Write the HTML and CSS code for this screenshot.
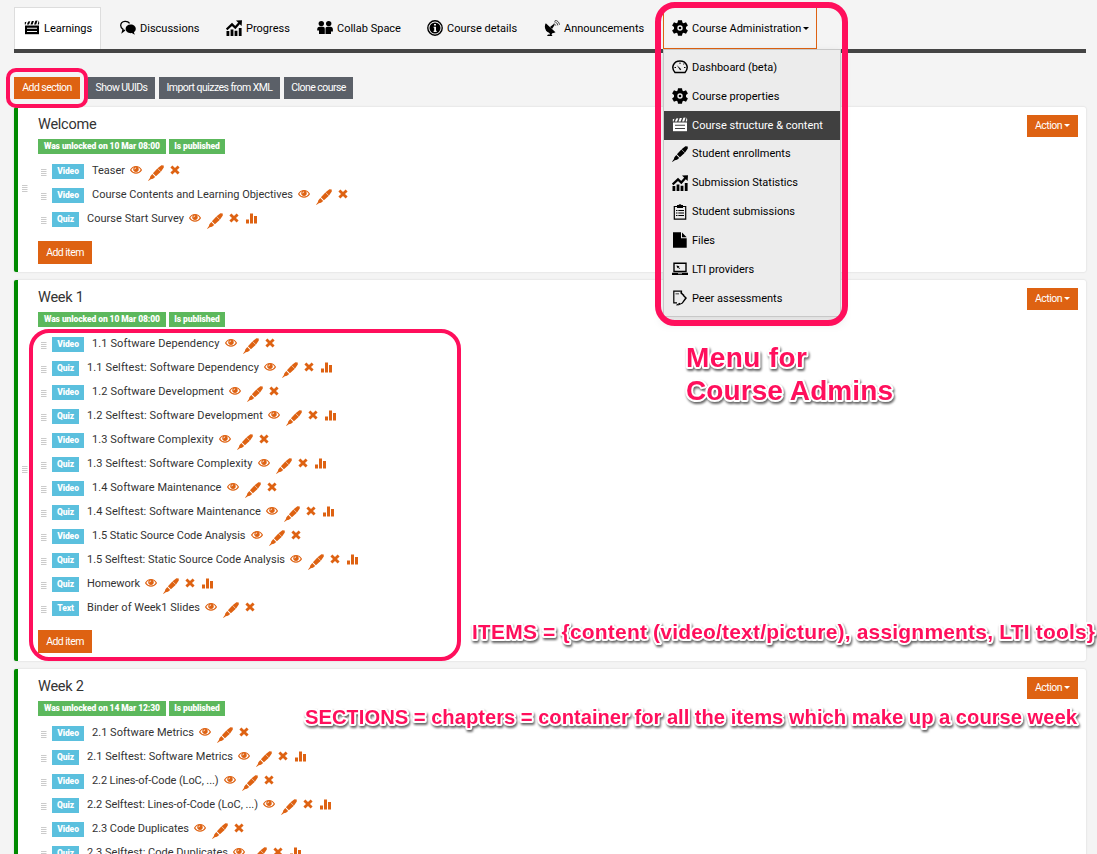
FILE: index.html
```html
<!DOCTYPE html>
<html lang="en">
<head>
<meta charset="utf-8">
<title>Course structure &amp; content</title>
<link rel="stylesheet" href="styles.css">
</head>
<body>
<svg class="sprite" aria-hidden="true">
  <symbol id="clap" viewBox="0 0 16 16"><path d="M1 5.500h14v8.700H1z"/><path d="M.8 2.200 2.400 1.800 1.600 4.400H.8zM4.200 1.600 6.300 1.300 5 4.400H2.900zM7.800 1.100 9.900.9 8.600 4.400H6.500zM11.400.8 13.500.6 12.200 4.400H10.100zM14.800.5 15.200 2.600 15 4.400H13.600z"/><path class="cut" d="M3 7.700h10v1H3zM3 11h10v1H3z"/></symbol>
  <symbol id="chat" viewBox="0 0 16 16"><path d="M9.600 3.400C8.400 1.600 6.600 1.200 5 1.300 2.500 1.500.7 3.400.7 5.600c0 1.700 1 3 2.400 3.800L2.400 12l2.600-2" fill="none" stroke="currentColor" stroke-width="1.300"/><path d="M10.700 4.500c3 0 5.100 1.900 5.100 4.300 0 1.400-.7 2.600-1.900 3.400l.9 2.600-3-1.700c-3.600.4-6.200-1.600-6.200-4.300s2.200-4.300 5.100-4.300z"/></symbol>
  <symbol id="stats" viewBox="0 0 16 16"><path d="M.5 11h2.800v5H.5zM4.600 9.500h2.800V16H4.600zM8.600 10.800h2.800V16H8.600zM12.800 8h2.800v8h-2.800z"/><path d="M.6 9.400 6 4.300 9.300 7.500 13.600 2.800" fill="none" stroke="currentColor" stroke-width="2.300"/><path d="M10 .6 16 .2 15.600 6z"/></symbol>
  <symbol id="people" viewBox="0 0 16 16"><circle cx="4.300" cy="3.600" r="2.700"/><circle cx="11.700" cy="3.600" r="2.700"/><path d="M.2 9.500c0-2 1.300-2.700 2.500-2.700h3.200c1.200 0 1.900.8 1.900 2.200V14H2v-3.500H.2zM8.500 9c0-1.400.7-2.200 1.900-2.200h3.100c1.400 0 2.400 1 2.400 2.700v1.900H14V14H8.500z"/></symbol>
  <symbol id="info" viewBox="0 0 16 16"><circle cx="8" cy="8" r="7.200" fill="none" stroke="currentColor" stroke-width="1.400"/><circle cx="8" cy="8" r="5.500"/><path class="cut" d="M7 4h2v1.600H7zM6.600 6.700H9v4h.7V12H6.600v-1.200h.6V7.800h-.6z"/></symbol>
  <symbol id="dish" viewBox="0 0 16 16"><path d="M1.800 3.300 11.500 12.200C8 14.200 4 13.200 2 10.500.5 8 .5 5.300 1.800 3.300z"/><path d="M5 12h4l-1.500 2.500 1 1.500H3l1-1.500H6zM6 7l3.800-3 .8.900L8 9z"/><path d="M9.800 3.700c1 .2 1.700.8 2 1.900M10.200 1.700c2 .3 3.300 1.600 3.600 3.700M10.800.2c2.700.3 4.400 2 4.700 4.600" fill="none" stroke="currentColor" stroke-width=".7"/></symbol>
  <symbol id="gear" viewBox="0 0 16 16"><path fill-rule="evenodd" d="M6 .3h4l.4 2.200 1.200.7L14 2.300l1.900 3.300L14 7.100v1.800l1.900 1.500-1.900 3.300-2.400-.9-1.200.7-.4 2.200H6l-.4-2.200-1.200-.7-2.400.9L.1 10.400 2 8.900V7.100L.1 5.600 2 2.300l2.400.9 1.200-.7zM8 5.300a2.700 2.700 0 100 5.400 2.700 2.700 0 000-5.400z"/><circle cx="8" cy="8" r="1.300"/></symbol>
  <symbol id="dash" viewBox="0 0 16 16"><path d="M3 13.500C-1.500 8.500 1.600 2 8 2s9.500 6.500 5 11.500z" fill="none" stroke="currentColor" stroke-width="1.500"/><path d="m4.700 6 4.600 4.300-1.200.9zM7.500 3.500h1V5h-1zM2.500 8H4v1H2.500zM12 8h1.500v1H12zM11 5l1-.8.600.6-.8 1z"/></symbol>
  <symbol id="pen" viewBox="0 0 16 16"><path d="M13.400.3 15.700.5 15.800 2.500 12.900 6.700 7.900 11.300 4.900 8.300 9.600 3.200zM4.300 8.900 7.200 11.900 5 13.700 2.800 14.200.3 15.900.2 15.500 1.800 13.200 2.400 11.200z"/><path class="slit" d="m9.300 3.200 3.600 3.600" fill="none" stroke-width=".6"/></symbol>
  <symbol id="clip" viewBox="0 0 16 16"><path d="M2.300 2.500h11.400v12.700H2.300z" fill="none" stroke="currentColor" stroke-width="1.200"/><path d="M5 1h1.500L8 0l1.500 1H11v3H5zM4 6h1.500v1H4zM6.300 6H12v1H6.300zM4 8.500h1.500v1H4zM6.300 8.500H12v1H6.300zM4 11h1.500v1H4zM6.300 11H12v1H6.300z"/></symbol>
  <symbol id="file" viewBox="0 0 16 16"><path d="M1 .3h8v6h5.700v9.400H1zM10 .5l4.700 4.700H10z"/></symbol>
  <symbol id="laptop" viewBox="0 0 16 16"><path d="M2 2.300h12v8.200H2z" fill="none" stroke="currentColor" stroke-width="1.400"/><path d="M0 11.800h16V14H0zM4.500 4.500l3 .8-.9.600L8 7.500l-.6.600-1.400-1.600-.7.800z"/><path class="cut" d="M6 12.400h4v.7H6z"/></symbol>
  <symbol id="peer" viewBox="0 0 16 16"><path d="M9.500 3.500V1.200H1.800v11.600H5M4.500 15.300l3.500-2" fill="none" stroke="currentColor" stroke-width="1.200"/><path d="m8.500 1.500 4 3.500-1 1-3-2.500zM11.500 4.500 15 8l-4.300 5.500-4.900 2.200 1.500-1.800 2.500-1.200L13 8 10.500 5.500zM3.500 3.500H7v.8H3.500z"/></symbol>
  <symbol id="eye" viewBox="0 0 12 10"><path d="M.6 5C3 .3 9 .3 11.400 5 9 9.200 3 9.200.6 5z" fill="none" stroke="currentColor" stroke-width="1.200"/><circle cx="6" cy="4.300" r="2.700"/><path d="M4.700 4.300c0-.9.500-1.400 1.400-1.400" fill="none" stroke="#fff" stroke-width=".8"/></symbol>
  <symbol id="x" viewBox="0 0 10 10"><path d="M2.400.5 5 3 7.600.5l2 2L7 5l2.600 2.500-2 2L5 7 2.400 9.500l-2-2L3 5 .4 2.500z"/></symbol>
  <symbol id="bars" viewBox="0 0 11 11"><path d="M0 6.500h3V10.500H0zM4 .5h3v10H4zM8 3h3v7.500H8z"/></symbol>
  <symbol id="grip" viewBox="0 0 6 8"><path d="M0 1h5.500v.8H0zM0 3h5.500v.8H0zM0 5h5.500v.8H0zM0 7h5.500v.8H0z"/></symbol>
</svg>

<main class="page">
  <nav class="tabs">
    <a class="tab learn active"><svg class="ic"><use href="#clap"/></svg>Learnings</a>
    <a class="tab disc"><svg class="ic"><use href="#chat"/></svg>Discussions</a>
    <a class="tab prog"><svg class="ic"><use href="#stats"/></svg>Progress</a>
    <a class="tab collab"><svg class="ic"><use href="#people"/></svg>Collab Space</a>
    <a class="tab details"><svg class="ic"><use href="#info"/></svg>Course details</a>
    <a class="tab ann"><svg class="ic"><use href="#dish"/></svg>Announcements</a>
    <div class="tab admin"><svg class="ic"><use href="#gear"/></svg>Course Administration<i class="caret"></i>
      <ul class="menu">
        <li><svg class="ic"><use href="#dash"/></svg>Dashboard (beta)</li>
        <li><svg class="ic"><use href="#gear"/></svg>Course properties</li>
        <li class="selected"><svg class="ic"><use href="#clap"/></svg>Course structure &amp; content</li>
        <li><svg class="ic"><use href="#pen"/></svg>Student enrollments</li>
        <li><svg class="ic"><use href="#stats"/></svg>Submission Statistics</li>
        <li><svg class="ic"><use href="#clip"/></svg>Student submissions</li>
        <li><svg class="ic"><use href="#file"/></svg>Files</li>
        <li><svg class="ic"><use href="#laptop"/></svg>LTI providers</li>
        <li><svg class="ic"><use href="#peer"/></svg>Peer assessments</li>
      </ul>
    </div>
  </nav>

  <div class="toolbar">
    <button class="btn orange add-section">Add section</button>
    <button class="btn uuid">Show UUIDs</button>
    <button class="btn import">Import quizzes from XML</button>
    <button class="btn clone">Clone course</button>
  </div>

  <div id="sections"></div>
</main>

<svg class="notes" viewBox="0 0 1097 854">
  <rect class="ring" x="8" y="70" width="78" height="36" rx="8"/>
  <rect class="ring thick" x="658" y="5" width="187" height="318" rx="17"/>
  <rect class="ring" x="31" y="331" width="428" height="328" rx="18"/>
  <g class="callout">
    <text class="big" x="686" y="367" textLength="121">Menu for</text>
    <text class="big" x="686" y="400" textLength="207">Course Admins</text>
    <text class="items" x="472" y="639" textLength="623">ITEMS = {content (video/text/picture), assignments, LTI tools}</text>
    <text x="305" y="724" textLength="772">SECTIONS = chapters = container for all the items which make up a course week</text>
  </g>
</svg>
<script src="app.js"></script>
</body>
</html>
```
FILE: styles.css
```css
* { box-sizing: border-box; }
html { overflow: hidden; }
body { margin: 0; height: 854px; overflow: hidden; position: relative; background: #f4f4f4; color: #333; font: 11px/16px Roboto, "Open Sans", sans-serif; letter-spacing: 0; }
.sprite { position: absolute; width: 0; height: 0; }
svg { fill: currentColor; flex: none; display: block; }
.page { padding: 7px 11px 0 14px; }

.tabs { display: flex; gap: 9px; height: 46px; border-bottom: 4px solid #444; }
.tab { display: flex; align-items: center; height: 42px; padding-left: 9px; border: 1px solid transparent; border-bottom: 0; color: #000; white-space: nowrap; }
.tab.active { background: #fff; border-color: #ddd; }
.learn { width: 87px; }
.disc { width: 97px; }
.prog { width: 82px; }
.collab { width: 101px; }
.details { width: 108px; }
.ann { width: 119px; }
.tab.admin { position: relative; width: 154px; margin-left: 1px; border: 1px solid #de6212; padding: 1px 0 0 8px; background: #f4f4f4; }
.ic { width: 16px; height: 16px; margin: -1px 4px 0 0; --cut: #f4f4f4; }
.cut { fill: var(--cut); }
.slit { stroke: #f4f4f4; }
.caret { margin-left: 2px; border: 3px solid transparent; border-top-color: currentColor; border-bottom: 0; }

.menu { position: absolute; z-index: 2; top: 41px; left: -1px; width: 178px; height: 268px; margin: 0; padding: 3.500px 0 0; list-style: none; background: #ececec; border: 1px solid #c8c8c8; box-shadow: 0 5px 10px rgba(0,0,0,.15); }
.menu li { display: flex; align-items: center; height: 28.850px; padding-left: 8px; }
.menu .selected { background: #404040; color: #fff; }
.menu .selected .ic { --cut: #404040; }

.toolbar { display: flex; gap: 4px; margin: 24px 0 8px; }
.btn { height: 22px; padding: 0; border: 0; background: #5b6068; color: #fff; font: inherit; font-size: 10.500px; letter-spacing: -.54px; white-space: nowrap; }
.orange { background: #de6212; }
.add-section { width: 66px; margin-right: 4px; }
.uuid { width: 67px; }
.import { width: 121px; }
.clone { width: 69px; }

.card { display: flex; align-items: center; margin-bottom: 8px; background: #fff; border-left: 4px solid #008a00; border-radius: 2px; box-shadow: 0 0 2px rgba(0,0,0,.16); }
.card:last-child { height: 390px; }
.card:last-child .body { align-self: flex-start; }
.grip { width: 6px; height: 8px; color: #bbb; }
.card > .grip { margin: -3px 10px 0 4px; }
.body { flex: 1; padding: 7px 0 8px; }
.head { display: flex; justify-content: space-between; align-items: flex-start; height: 25px; }
.head h2 { margin: 1px 0 0; font-size: 14.500px; line-height: 20px; font-weight: 400; letter-spacing: -.25px; }
.head .btn { width: 51px; margin: 1px 8px 0 0; }
.head .caret { display: inline-block; vertical-align: 2px; }
.tags { display: flex; gap: 3px; }
.tag { height: 15px; background: #5cb85c; color: #fff; font-size: 8.500px; font-weight: 900; line-height: 15px; text-align: center; white-space: nowrap; letter-spacing: -.1px; }
.tag.when { width: 128px; }
.tag.state { width: 56px; }
.rows { margin: 4px 0 11px; padding: 0; list-style: none; }
.row { display: flex; height: 24px; padding-left: 3px; color: #de6212; }
.row .grip { margin: 10px 5px 0 0; }
.tag.kind { width: 27px; margin: 6px 8px 0 0; background: #5bc0de; }
.tag.video { width: 32px; }
.video + .name { margin-left: 0; }
.name { margin-top: 5px; color: #333; white-space: nowrap; }
.eye { width: 12px; height: 10px; margin: 7px 6px 0 5px; }
.row .pen { width: 16px; height: 16px; margin: 7px 6px 0 0; }
.row .slit { stroke: #fff; }
.x { width: 10px; height: 10px; margin: 7px 7px 0 0; }
.bars { width: 11px; height: 11px; margin-top: 7px; }
.add-item { display: block; width: 54px; height: 23px; }

.notes { position: absolute; z-index: 5; inset: 0; width: 1097px; height: 854px; pointer-events: none; }
.ring { fill: none; stroke: #ff0f5c; stroke-width: 4; }
.thick { stroke-width: 6; }
.callout { filter: drop-shadow(1.500px 2.500px 1px rgba(0,0,0,.6)); }
.callout text { font: bold 20.300px "Liberation Sans", Arial, sans-serif; fill: #ff0f5c; stroke: #fff; stroke-width: 4px; stroke-linejoin: round; paint-order: stroke; }
.callout .items { font-size: 21px; }
.callout .big { font-size: 28px; }
```
FILE: app.js
```js
// Each item: kind, title, title width in px
const sections = [
  { title: 'Welcome', unlocked: '10 Mar 08:00', items: [
    ['Video', 'Teaser', 33],
    ['Video', 'Course Contents and Learning Objectives', 201],
    ['Quiz', 'Course Start Survey', 97]
  ] },
  { title: 'Week 1', unlocked: '10 Mar 08:00', items: [
    ['Video', '1.1 Software Dependency', 127.5],
    ['Quiz', '1.1 Selftest: Software Dependency', 172],
    ['Video', '1.2 Software Development', 132],
    ['Quiz', '1.2 Selftest: Software Development', 176],
    ['Video', '1.3 Software Complexity', 121.5],
    ['Quiz', '1.3 Selftest: Software Complexity', 165.5],
    ['Video', '1.4 Software Maintenance', 129.5],
    ['Quiz', '1.4 Selftest: Software Maintenance', 174],
    ['Video', '1.5 Static Source Code Analysis', 153.5],
    ['Quiz', '1.5 Selftest: Static Source Code Analysis', 198],
    ['Quiz', 'Homework', 53],
    ['Text', 'Binder of Week1 Slides', 113]
  ] },
  { title: 'Week 2', unlocked: '14 Mar 12:30', items: [
    ['Video', '2.1 Software Metrics', 102],
    ['Quiz', '2.1 Selftest: Software Metrics', 146],
    ['Video', '2.2 Lines-of-Code (LoC, ...)', 126.5],
    ['Quiz', '2.2 Selftest: Lines-of-Code (LoC, ...)', 171],
    ['Video', '2.3 Code Duplicates', 97],
    ['Quiz', '2.3 Selftest: Code Duplicates', 141]
  ] }
];

const icon = name => `<svg class="${name}"><use href="#${name}"/></svg>`;

const row = ([kind, title, width]) => `
  <li class="row">${icon('grip')}<span class="tag kind ${kind.toLowerCase()}">${kind}</span>
    <span class="name" data-width="${width}">${title}</span>
    ${icon('eye')}${icon('pen')}${icon('x')}${kind === 'Quiz' ? icon('bars') : ''}</li>`;

document.getElementById('sections').innerHTML = sections.map((s, i) => `
  <section class="card">${icon('grip')}
    <div class="body">
      <div class="head"><h2>${s.title}</h2><button class="btn orange">Action<i class="caret"></i></button></div>
      <div class="tags"><span class="tag when">Was unlocked on ${s.unlocked}</span><span class="tag state">Is published</span></div>
      <ul class="rows">${s.items.map(row).join('')}</ul>
      ${i < 2 ? '<button class="btn orange add-item">Add item</button>' : ''}
    </div>
  </section>`).join('');

// Spread the letters of each title over its width
document.querySelectorAll('.name').forEach(el => {
  const width = Number(el.dataset.width);
  const gap = (width - el.getBoundingClientRect().width) / el.textContent.length;
  el.style.letterSpacing = gap + 'px';
  el.style.width = width + 'px';
});
```
